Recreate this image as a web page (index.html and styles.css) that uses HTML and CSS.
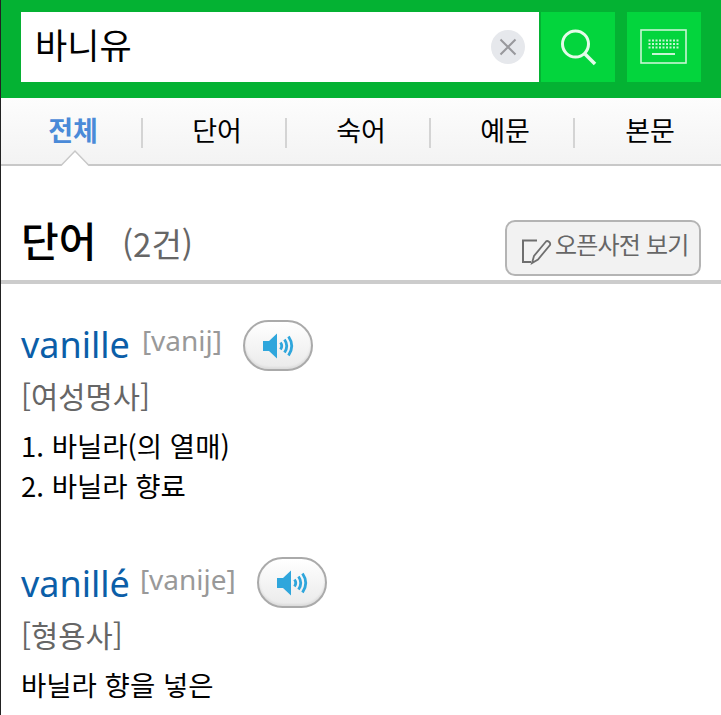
FILE: index.html
```html
<!DOCTYPE html>
<html lang="ko">
<head>
<meta charset="utf-8">
<title>바니유</title>
<link rel="stylesheet" href="styles.css">
</head>
<body>
<header class="search">
  <div class="field">
    <span class="query">바니유</span>
    <span class="clear">
      <svg width="34" height="34" viewBox="0 0 34 34"><circle cx="17" cy="17" r="17" fill="#e6e8ec"/><path d="M9.500 9.500L24.500 24.500M24.500 9.500L9.500 24.500" stroke="#98989c" stroke-width="2" fill="none"/></svg>
    </span>
  </div>
  <button class="sbtn first">
    <svg width="40" height="40" viewBox="0 0 40 40"><circle cx="17.500" cy="17" r="13" stroke="#e4fbe9" stroke-width="3" fill="none"/><path d="M27 27L37 37" stroke="#e4fbe9" stroke-width="3.500" fill="none"/></svg>
  </button>
  <button class="sbtn">
    <svg width="48" height="36" viewBox="0 0 48 36"><rect x="1" y="1" width="45" height="33" fill="none" stroke="#c8f5d4" stroke-width="1.600"/><path d="M8.500 11.500H39.500M8.500 15H39.500M8.500 18.500H39.500" stroke="#c8f5d4" stroke-width="2" stroke-dasharray="2 1.500" fill="none"/><path d="M12 25H35" stroke="#c8f5d4" stroke-width="2" fill="none"/></svg>
  </button>
</header>

<nav class="tabs">
  <a class="tab active">전체</a>
  <a class="tab">단어</a>
  <a class="tab">숙어</a>
  <a class="tab">예문</a>
  <a class="tab">본문</a>
  <svg class="caret" width="30" height="17" viewBox="0 0 30 17"><path d="M0 17L14 2L28 17Z" fill="#fff"/><path d="M0 16.500L14 2L28 16.500" stroke="#c8c8c8" stroke-width="1.500" fill="none"/></svg>
</nav>

<section class="head">
  <h2 class="title">단어 <span class="count">(2건)</span></h2>
  <a class="open">
    <svg width="32" height="32" viewBox="0 0 32 32"><path d="M16 4.500H2V26H10" stroke="#6f6f6f" stroke-width="2" fill="none"/><path d="M11 27L13 20L25 5.500C26.500 4 30 6.500 29 9L17 23.500Z" stroke="#6f6f6f" stroke-width="1.800" fill="none"/></svg>
    <span>오픈사전 보기</span>
  </a>
</section>

<article class="entry">
  <div class="word"><span class="lemma">vanille</span><span class="ipa">[vanij]</span>
    <button class="sound"><svg width="36" height="28" viewBox="0 0 36 28"><path d="M3 9H9L17 1.500V26.500L9 19H3Z" fill="#2fa6dc"/><path d="M20.500 10.500Q23 14 20.500 17.500M24.500 7.500Q29 14 24.500 20.500M28.500 4.500Q35 14 28.500 23.500" stroke="#2fa6dc" stroke-width="2.800" fill="none"/></svg></button>
  </div>
  <p class="pos">[여성명사]</p>
  <p class="def">1. 바닐라(의 열매)</p>
  <p class="def">2. 바닐라 향료</p>
</article>

<article class="entry second">
  <div class="word"><span class="lemma">vanillé</span><span class="ipa">[vanije]</span>
    <button class="sound"><svg width="36" height="28" viewBox="0 0 36 28"><path d="M3 9H9L17 1.500V26.500L9 19H3Z" fill="#2fa6dc"/><path d="M20.500 10.500Q23 14 20.500 17.500M24.500 7.500Q29 14 24.500 20.500M28.500 4.500Q35 14 28.500 23.500" stroke="#2fa6dc" stroke-width="2.800" fill="none"/></svg></button>
  </div>
  <p class="pos">[형용사]</p>
  <p class="def">바닐라 향을 넣은</p>
</article>
</body>
</html>
```

FILE: styles.css
```css
* { box-sizing: border-box; }
html, body { margin: 0; padding: 0; }
body {
  width: 721px;
  height: 715px;
  overflow: hidden;
  background: #fff;
  border-left: 1px solid #222;
  font-family: "Noto Sans CJK KR", "Noto Sans", sans-serif;
  color: #000;
}
.search {
  height: 98px;
  background: #04b233;
  display: flex;
  padding: 12px 20px 16px 20px;
}
.field {
  width: 518px;
  background: #fff;
  display: flex;
  align-items: center;
  justify-content: space-between;
  padding: 0 14px 0 14px;
}
.query { font-size: 35px; line-height: 63px; height: 70px; }
.clear { display: flex; }
.sbtn {
  width: 74px;
  background: #03d53d;
  border: 0;
  padding: 0;
  margin-left: 12px;
  display: flex;
  align-items: center;
  justify-content: center;
}
.sbtn.first { margin-left: 2px; }
.tabs {
  position: relative;
  height: 68px;
  display: flex;
  background: linear-gradient(#fdfdfd, #f3f3f3);
  border-bottom: 2px solid #c8c8c8;
  align-items: center;
  margin-left: -2px;
  padding-left: 2px;
}
.tab {
  width: 144px;
  height: 30px;
  margin-top: 3px;
  padding-left: 6px;
  font-size: 27px;
  line-height: 24px;
  text-align: center;
  border-right: 2px solid #d4d4d4;
}
.tab:first-child { margin-left: -2px; }
.tab:last-of-type { border-right: 0; }
.tab.active { color: #4a8ad8; font-weight: 700; }
.caret { position: absolute; left: 62px; bottom: -2px; }
.head {
  height: 118px;
  border-bottom: 4px solid #ccc;
  display: flex;
  justify-content: space-between;
  align-items: flex-start;
  padding: 0 20px;
}
.title { margin: 45px 0 0; font-size: 41px; line-height: 56px; font-weight: 500; }
.count { font-size: 33px; font-weight: 400; color: #666; margin-left: 14px; }
.open {
  margin-top: 54px;
  width: 196px;
  height: 56px;
  background: #f2f2f2;
  border: 2px solid #b4b4b4;
  border-radius: 10px;
  display: flex;
  align-items: center;
  padding-left: 14px;
  color: #666;
  font-size: 24px;
  letter-spacing: -0.8px;
  white-space: nowrap;
}
.open svg { margin-top: 8px; flex: none; }
.open span { margin: -10px 0 0 2px; }
.entry { padding: 36px 20px 0; }
.entry.second { padding-top: 54px; }
.word { display: flex; align-items: center; height: 50px; }
.lemma { font-family: "Noto Sans", sans-serif; font-size: 36px; color: #0b5ea8; line-height: 50px; }
.ipa { font-family: "Noto Sans", sans-serif; font-size: 28px; color: #999; margin-left: 12px; margin-top: -10px; }
.second .ipa { margin-left: 10px; }
.sound {
  width: 70px;
  height: 51px;
  margin-left: 21px;
  margin-top: 1px;
  border-radius: 26px;
  border: 2px solid #aaa;
  background: linear-gradient(#fff, #eaeaea);
  box-shadow: inset 0 -2px 2px #ddd;
  padding: 0;
  display: flex;
  align-items: center;
  justify-content: center;
}
.second .sound { margin-top: -3px; }
.pos { margin: 2px 0 5px; font-size: 29.6px; line-height: 48px; color: #666; }
.def { margin: 0; font-size: 27.5px; line-height: 40px; }
```
